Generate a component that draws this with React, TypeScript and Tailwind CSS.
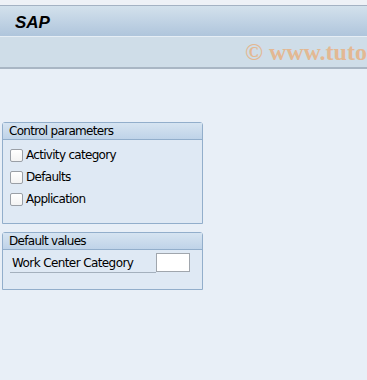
import React from "react";

const font = { fontFamily: '"DejaVu Sans", Tahoma, sans-serif' };

function Checkbox({ label }: { label: string }) {
  return (
    <label className="flex h-[22px] items-center gap-[3px] text-[12px] text-black">
      <span className="h-[13px] w-[13px] rounded-[2px] border border-[#9a9fa6] bg-gradient-to-b from-white to-[#f3f3f3]" />
      <span className="tracking-[-0.7px]">{label}</span>
    </label>
  );
}

function Group({ title, children }: { title: string; children: React.ReactNode }) {
  return (
    <div className="w-[201px] rounded-t-[3px] border border-[#92aecb] bg-[#dfe9f4]">
      <div className="h-[17px] border-b border-[#92aecb] bg-gradient-to-b from-[#d6e4f1] to-[#bfd3e8] pl-[6px] text-[12px] leading-[16px] tracking-[-0.7px] text-black">
        {title}
      </div>
      {children}
    </div>
  );
}

export default function App() {
  return (
    <div className="h-[380px] w-[367px] overflow-hidden bg-[#e8eff7]" style={font}>
      <div className="h-[5px] bg-[#eef1f6]" />
      <div className="h-[31px] border-t border-[#a4b2c3] bg-gradient-to-b from-[#d3e1ec] to-[#afc5dc] pl-[15px] pt-[4px]">
        <span className="text-[17px] font-bold italic text-black" style={{ fontFamily: '"Liberation Sans", Arial, sans-serif' }}>
          SAP
        </span>
      </div>
      <div className="flex h-[33px] items-center overflow-hidden whitespace-nowrap border-t border-[#e6eef5] border-b-[2px] border-b-[#a9b6c4] bg-[#cfdde8] pl-[245px]">
        <span
          className="text-[24px] font-bold text-[#e8b07e] opacity-80"
          style={{ fontFamily: '"Liberation Serif", "Times New Roman", serif' }}
        >
          © www.tutorialkart.com
        </span>
      </div>

      <div className="ml-[2px] mt-[53px] flex flex-col gap-[8px]">
        <Group title="Control parameters">
          <div className="flex h-[83px] flex-col pl-[7px] pt-[4px]">
            <Checkbox label="Activity category" />
            <Checkbox label="Defaults" />
            <Checkbox label="Application" />
          </div>
        </Group>
        <Group title="Default values">
          <div className="flex h-[39px] items-start pl-[7px] pt-[3px]">
            <div className="flex h-[20px] w-[146px] items-center border-b border-[#a4b0bd] pl-[2px] text-[12px] tracking-[-0.6px] text-black">
              Work Center Category
            </div>
            <div className="h-[19px] w-[34px] border border-[#a0a6ad] bg-white" />
          </div>
        </Group>
      </div>
    </div>
  );
}
